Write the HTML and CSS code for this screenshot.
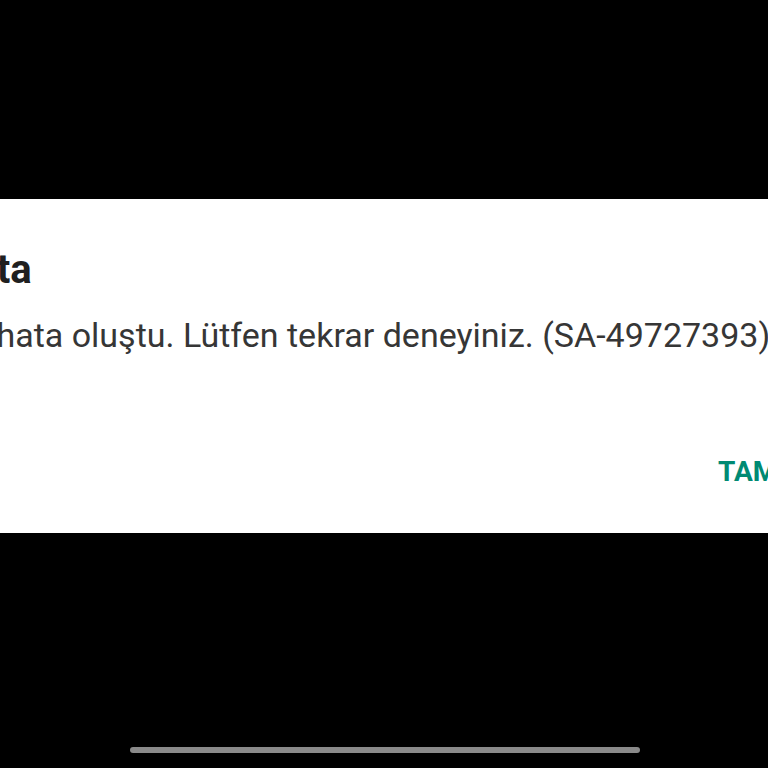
FILE: index.html
```html
<!DOCTYPE html>
<html lang="tr">
<head>
<meta charset="utf-8">
<title>Hata</title>
<link rel="stylesheet" href="styles.css">
</head>
<body>
<div class="screen">
  <div class="top-space"></div>
  <div class="dialog">
    <div class="dialog-title">Hata</div>
    <div class="dialog-message">Bir hata oluştu. Lütfen tekrar deneyiniz. (SA-49727393)</div>
    <div class="dialog-actions">
      <span class="dialog-button">TAMAM</span>
    </div>
  </div>
  <div class="bottom-space">
    <div class="home-bar"></div>
  </div>
</div>
</body>
</html>
```

FILE: styles.css
```css
html, body {
  margin: 0;
  padding: 0;
  background: #000;
  overflow: hidden;
}

.screen {
  width: 768px;
  height: 768px;
  display: flex;
  flex-direction: column;
  overflow: hidden;
  font-family: Roboto, "Noto Sans", "Liberation Sans", sans-serif;
}

.top-space {
  height: 199px;
  flex: none;
}

.dialog {
  flex: none;
  height: 334px;
  box-sizing: border-box;
  width: 900px;
  margin-left: -77px;
  padding: 49px 24px 0 24px;
  background: #fff;
  display: flex;
  flex-direction: column;
}

.dialog-title {
  font-size: 40px;
  line-height: 44px;
  font-weight: 700;
  color: #202020;
  white-space: nowrap;
}

.dialog-message {
  margin-top: 23px;
  font-size: 34px;
  line-height: 40px;
  color: #363636;
  white-space: nowrap;
}

.dialog-actions {
  margin-top: 99px;
  display: flex;
  padding-left: 771px;
}

.dialog-button {
  font-size: 28px;
  line-height: 36px;
  font-weight: 700;
  color: #008a73;
  white-space: nowrap;
}

.bottom-space {
  flex: 1;
  display: flex;
  align-items: flex-end;
  padding-bottom: 15px;
  padding-left: 130px;
}

.home-bar {
  width: 510px;
  height: 6px;
  border-radius: 3px;
  background: #8a8a8a;
}
```
